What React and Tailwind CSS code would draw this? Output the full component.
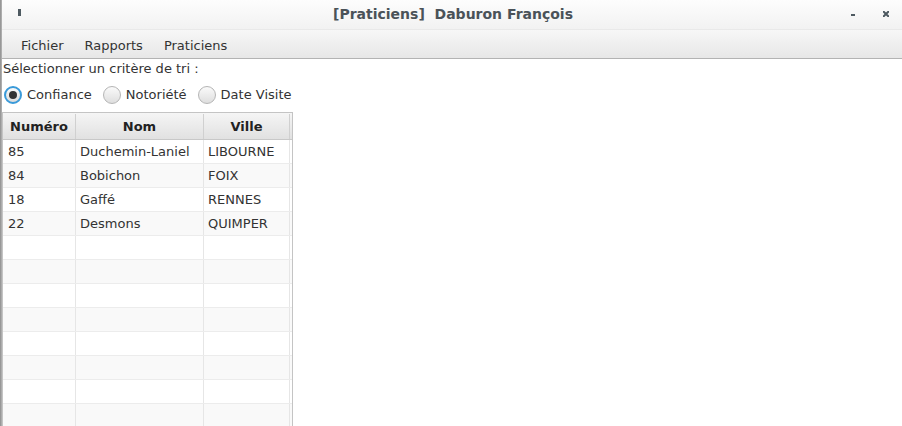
import React from "react";

const rows = [
  ["85", "Duchemin-Laniel", "LIBOURNE"],
  ["84", "Bobichon", "FOIX"],
  ["18", "Gaffé", "RENNES"],
  ["22", "Desmons", "QUIMPER"],
];

function Radio({ checked, label }) {
  return (
    <div className="flex items-center gap-[5px]">
      <div
        className={
          "w-[18px] h-[18px] rounded-full flex items-center justify-center " +
          (checked
            ? "border-[2px] border-[#3a9ad9] bg-gradient-to-b from-[#fafafa] to-[#dcdcdc]"
            : "border border-[#b5b5b5] bg-gradient-to-b from-[#fafafa] to-[#dedede]")
        }
      >
        {checked && <div className="w-[8px] h-[8px] rounded-full bg-[#333]" />}
      </div>
      <span className="text-[13px] text-[#333]">{label}</span>
    </div>
  );
}

export default function App() {
  const allRows = [];
  for (let i = 0; i < 12; i++) allRows.push(rows[i] || ["", "", ""]);
  return (
    <div
      className="w-[902px] h-[426px] overflow-hidden flex bg-white"
      style={{ fontFamily: '"DejaVu Sans", sans-serif' }}
    >
      <div className="w-[2px] h-full bg-gradient-to-r from-[#8d8d8d] to-[#b8b8b8] shrink-0" />
      <div className="flex-1 flex flex-col min-w-0">
        {/* Title bar */}
        <div className="h-[30px] shrink-0 bg-gradient-to-b from-[#fdfdfd] to-[#f2f2f2] border-b border-[#e9e9e9] flex items-center relative">
          <div className="absolute left-[16px] top-[9px] w-[3px] h-[7px] bg-[#4e5a61]" />
          <div className="flex-1 text-center font-bold text-[14px] text-[#4a5258] pl-[2px]">
            [Praticiens]&nbsp; Daburon François
          </div>
          <div className="absolute left-[849px] top-[14px] w-[4px] h-[2px] bg-[#4e5a61]" />
          <svg className="absolute left-[881px] top-[11px]" width="6" height="6" viewBox="0 0 6 6">
            <path d="M0 0 L6 6 M6 0 L0 6" stroke="#4e5a61" strokeWidth="2" />
          </svg>
        </div>
        {/* Menu bar */}
        <div className="h-[29px] shrink-0 bg-gradient-to-b from-[#f7f7f7] to-[#e7e7e7] border-b border-[#b3b3b3] flex items-center text-[13px] text-[#333] pt-[4px]">
          <span className="ml-[19px]">Fichier</span>
          <span className="ml-[21px]">Rapports</span>
          <span className="ml-[21px]">Praticiens</span>
        </div>
        {/* Content */}
        <div className="flex-1 flex flex-col">
          <div className="h-[19px] flex items-center pl-[1px] text-[13px] text-[#333]">
            Sélectionner un critère de tri :
          </div>
          <div className="h-[34px] flex items-center pl-[2px] gap-[11px]">
            <Radio checked label="Confiance" />
            <Radio label="Notoriété" />
            <Radio label="Date Visite" />
          </div>
          <div className="w-[291px] flex-1 border border-[#c4c4c4] border-b-0 flex flex-col overflow-hidden ml-0">
            <div className="h-[27px] shrink-0 flex bg-gradient-to-b from-[#f5f5f5] to-[#e1e1e1] border-b border-[#c8c8c8] text-[13px] font-bold text-[#222] pt-[1px]">
              <div className="w-[73px] border-r border-[#d0d0d0] flex items-center justify-center">Numéro</div>
              <div className="w-[128px] border-r border-[#d0d0d0] flex items-center justify-center">Nom</div>
              <div className="w-[86px] border-r border-[#d0d0d0] flex items-center justify-center">Ville</div>
              <div className="flex-1" />
            </div>
            {allRows.map((r, i) => (
              <div
                key={i}
                className={
                  "h-[24px] shrink-0 flex text-[13px] text-[#333] border-b border-[#ececec] " +
                  (i % 2 === 1 ? "bg-[#f9f9f9]" : "bg-white")
                }
              >
                <div className="w-[73px] border-r border-[#e6e6e6] flex items-center pl-[5px]">{r[0]}</div>
                <div className="w-[128px] border-r border-[#e6e6e6] flex items-center pl-[4px]">{r[1]}</div>
                <div className="w-[86px] border-r border-[#e6e6e6] flex items-center pl-[4px]">{r[2]}</div>
                <div className="flex-1" />
              </div>
            ))}
          </div>
        </div>
      </div>
    </div>
  );
}
